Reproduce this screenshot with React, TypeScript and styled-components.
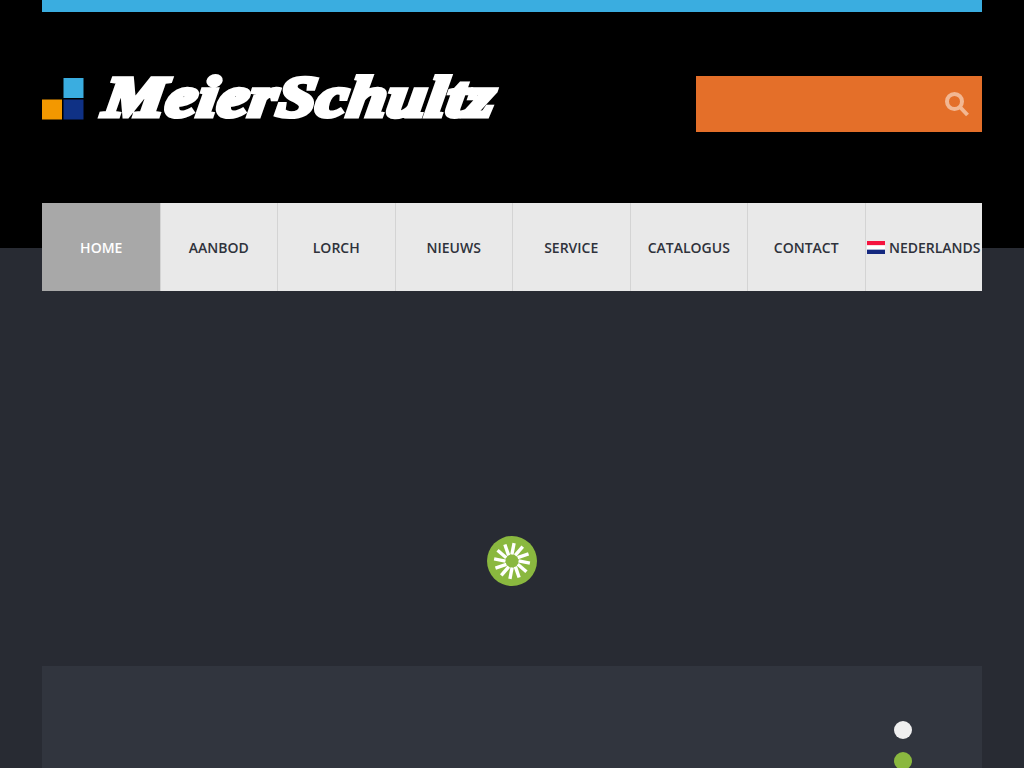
import React from 'react';
import styled, { createGlobalStyle } from 'styled-components';

const GlobalStyle = createGlobalStyle`
  html, body {
    margin: 0;
    padding: 0;
    height: 100%;
    overflow: hidden;
    background: linear-gradient(#000000 248px, #282b33 248px);
    font-family: "Open Sans", "Liberation Sans", sans-serif;
    -webkit-font-smoothing: antialiased;
  }
`;

const Page = styled.div`
  width: 940px;
  height: 768px;
  margin: 0 auto;
  overflow: hidden;
`;

const TopBar = styled.div`
  height: 12px;
  background: #3aade0;
`;

const Header = styled.header`
  height: 191px;
  display: flex;
  justify-content: space-between;
  align-items: flex-start;
`;

const Logo = styled.div`
  display: flex;
  align-items: flex-start;
  gap: 21px;
  padding-top: 66px;
`;

const LogoText = styled.span`
  display: block;
  height: 42px;
  margin-top: -2px;
  line-height: 42px;
  font-family: "Liberation Serif", serif;
  font-size: 57px;
  font-weight: 700;
  font-style: italic;
  letter-spacing: 1px;
  color: #ffffff;
  -webkit-text-stroke: 5px #ffffff;
  paint-order: stroke fill;
  stroke-linejoin: round;
  transform-origin: left center;
  transform: skewX(-8deg) scaleX(1.2);
`;

const SearchBox = styled.div`
  width: 286px;
  height: 56px;
  margin-top: 64px;
  padding-right: 13px;
  box-sizing: border-box;
  display: flex;
  justify-content: flex-end;
  align-items: center;
  background: #e46f29;
`;

const Nav = styled.nav`
  height: 88px;
  display: grid;
  grid-template-columns: repeat(8, 1fr);
  background: #e9e9e9;
`;

const NavItem = styled.a<{ $active?: boolean }>`
  display: flex;
  align-items: center;
  justify-content: center;
  gap: 4px;
  border-left: 1px solid ${(p) => (p.$active ? 'transparent' : '#d4d4d4')};
  background: ${(p) => (p.$active ? '#a8a8a8' : 'transparent')};
  color: ${(p) => (p.$active ? '#ffffff' : '#2f323b')};
  font-size: 14px;
  font-weight: 600;
  white-space: nowrap;
`;

const Stage = styled.main`
  height: 375px;
  box-sizing: border-box;
  padding-bottom: 80px;
  display: flex;
  justify-content: center;
  align-items: flex-end;
`;

const Panel = styled.section`
  height: 300px;
  box-sizing: border-box;
  padding: 55px 70px 0 0;
  display: flex;
  flex-direction: column;
  align-items: flex-end;
  gap: 13px;
  background: #31353e;
`;

const Dot = styled.span<{ $color: string }>`
  width: 18px;
  height: 18px;
  flex: none;
  border-radius: 50%;
  background: ${(p) => p.$color};
`;

const navItems = ['AANBOD', 'LORCH', 'NIEUWS', 'SERVICE', 'CATALOGUS', 'CONTACT'];

const LogoMark = () => (
  <svg width="42" height="42" viewBox="0 0 42 42">
    <rect x="21.5" y="0" width="20" height="20" fill="#3aade0" />
    <rect x="0" y="21.5" width="20" height="20" fill="#f39800" />
    <rect x="21.5" y="21.5" width="20" height="20" fill="#0f3185" />
  </svg>
);

const SearchIcon = () => (
  <svg width="24" height="25" viewBox="0 0 24 25" fill="none" stroke="#f2b792">
    <circle cx="9.5" cy="9.5" r="7.5" strokeWidth="4" />
    <path d="M14.5 14.5 L22.5 23" strokeWidth="4" />
  </svg>
);

const Flag = () => (
  <svg width="18" height="13" viewBox="0 0 18 12" preserveAspectRatio="none">
    <rect width="18" height="4" fill="#f5133f" />
    <rect y="4" width="18" height="4" fill="#ffffff" />
    <rect y="8" width="18" height="4" fill="#14287f" />
  </svg>
);

const Spinner = () => (
  <svg width="50" height="50" viewBox="0 0 50 50">
    <circle cx="25" cy="25" r="25" fill="#8ab83f" />
    {Array.from({ length: 12 }, (_, i) => (
      <line
        key={i}
        x1="24.2"
        y1="18.5"
        x2="25.2"
        y2="7"
        stroke="#ffffff"
        strokeWidth="3.4"
        transform={`rotate(${i * 30 + 6} 25 25)`}
      />
    ))}
  </svg>
);

export default function App() {
  return (
    <Page>
      <GlobalStyle />
      <TopBar />
      <Header>
        <Logo>
          <LogoMark />
          <LogoText>MeierSchultz</LogoText>
        </Logo>
        <SearchBox>
          <SearchIcon />
        </SearchBox>
      </Header>
      <Nav>
        <NavItem $active>HOME</NavItem>
        {navItems.map((item) => (
          <NavItem key={item}>{item}</NavItem>
        ))}
        <NavItem>
          <Flag />
          NEDERLANDS
        </NavItem>
      </Nav>
      <Stage>
        <Spinner />
      </Stage>
      <Panel>
        <Dot $color="#efefef" />
        <Dot $color="#8ab83f" />
      </Panel>
    </Page>
  );
}
